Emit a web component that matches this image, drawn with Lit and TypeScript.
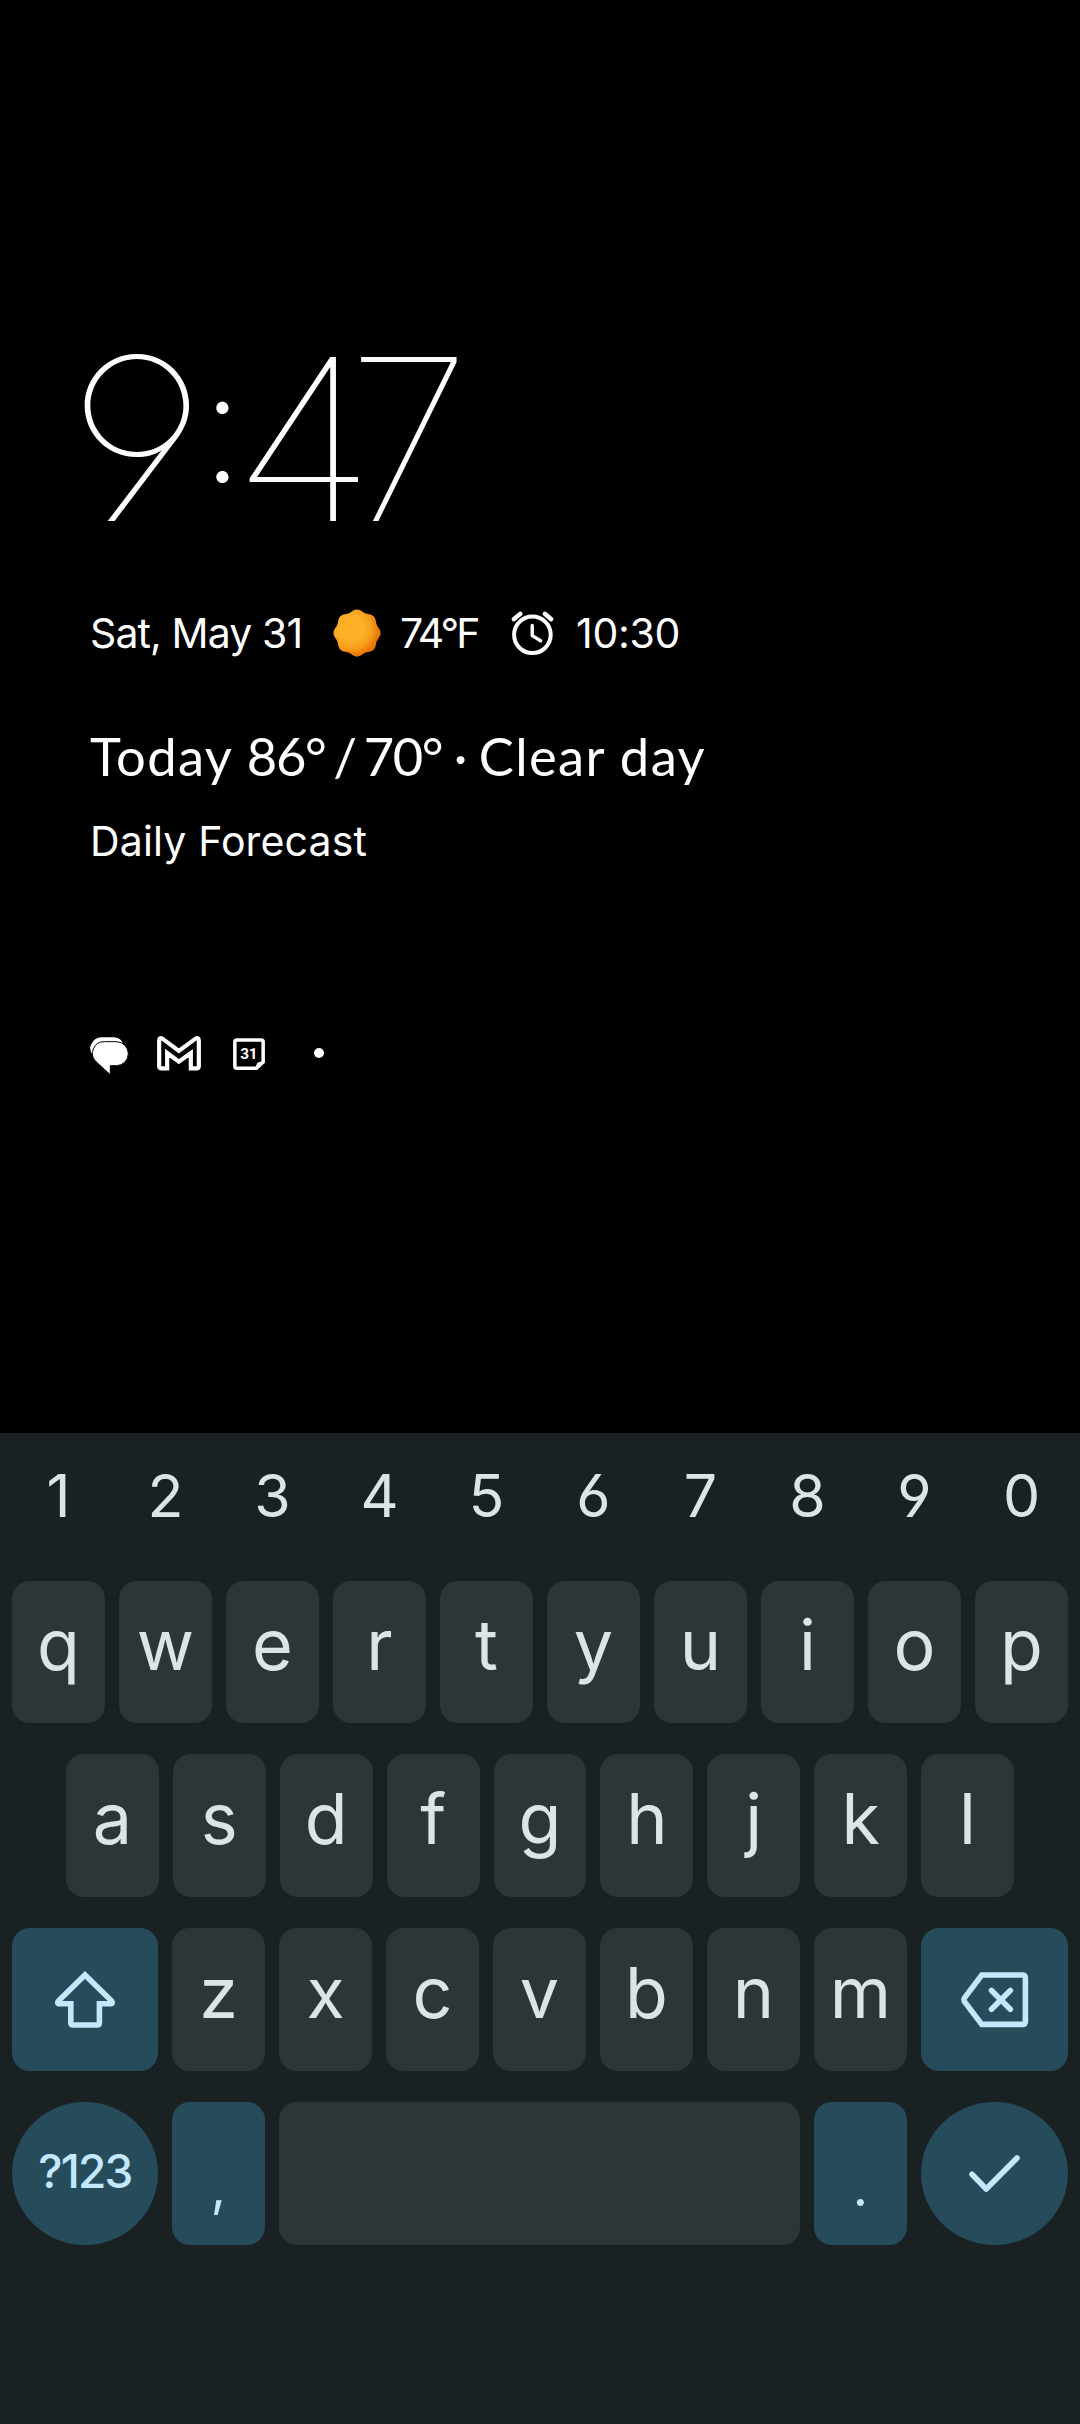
import { LitElement, html, css } from "lit";
import { customElement, property } from "lit/decorators.js";
import { classMap } from "lit/directives/class-map.js";

/** Outline of the eight-lobed sun, drawn round (24, 24). */
const sunOutline = (() => {
  const pts: string[] = [];
  for (let a = 0; a < 360; a += 3) {
    const t = (a * Math.PI) / 180;
    const r = 22.5 + 1.1 * Math.cos(8 * t);
    pts.push(`${(24 + r * Math.sin(t)).toFixed(2)} ${(24 - r * Math.cos(t)).toFixed(2)}`);
  }
  return `M${pts.join("L")}Z`;
})();

const shiftIcon = html`<svg width="60" height="57" viewBox="0 0 60 57" fill="none" stroke="currentColor" stroke-width="5.6">
  <path d="M30 3.9L56.2 29.6Q58.8 32.8 55 32.8H44.4V51.5Q44.4 54 41.9 54H18.3Q15.8 54 15.8 51.5V32.8H5Q1.2 32.8 3.8 29.6Z"/></svg>`;

const backspaceIcon = html`<svg width="68" height="56" viewBox="0 0 68 56" fill="none" stroke="currentColor" stroke-width="5.6">
  <path d="M20.8 3H61.4Q64.4 3 64.4 6V49.4Q64.4 52.4 61.4 52.4H20.8L3.9 30.1Q2.2 27.7 3.9 25.3Z"/>
  <path stroke-linecap="round" d="M30.5 18.5L49.3 37.3M49.3 18.5L30.5 37.3"/></svg>`;

const checkIcon = html`<svg width="51" height="37" viewBox="0 0 51 37" fill="none" stroke="currentColor" stroke-width="5.6"
  stroke-linecap="round" stroke-linejoin="round"><path d="M3 19.3L17.2 34L48 3"/></svg>`;

@customElement("kb-key")
export class KbKey extends LitElement {
  @property() kind = "letter";
  static styles = css`
    :host { display: block; min-width: 0; }
    .key {
      box-sizing: border-box; height: 100%; display: flex; align-items: center; justify-content: center;
      border-radius: 18px; background: #2e3538; color: #dce4e5; line-height: 1;
    }
    .letter { font-size: 70px; padding-bottom: 14px; }
    .digit, .open-digit { font-size: 59px; padding-bottom: 23px; background: none; }
    .open-digit { font-feature-settings: "ss01"; }
    .accent, .mark, .symbols, .enter { background: #264b5b; color: #c3e8fd; }
    .mark { font-size: 53px; padding-top: 27px; }
    .symbols { font-size: 46px; font-weight: 500; letter-spacing: -1.8px; padding-bottom: 5px; border-radius: 50%; }
    .enter { border-radius: 50%; }
  `;
  render() {
    return html`<div class=${classMap({ key: true, [this.kind]: true })}><slot></slot></div>`;
  }
}

@customElement("app-root")
export class AppRoot extends LitElement {
  static styles = css`
    :host {
      display: flex; flex-direction: column; height: 2424px; overflow: hidden;
      background: #000; color: #fff; font-family: Inter, Roboto, sans-serif;
    }
    svg { display: block; flex: none; }
    .lock { box-sizing: border-box; height: 1433px; padding: 326px 90px 0; display: flex; flex-direction: column; }
    .clock {
      display: flex; height: 226px; line-height: 226px; font-size: 226px; font-weight: 124;
      margin-left: -17px;
    }
    .clock span { flex: none; text-align: center; }
    .nine { width: 128px; transform: scaleX(1.1); font-feature-settings: "ss01"; }
    .colon { width: 38px; font-size: 155px; font-weight: 170; line-height: 199px; }
    .four { width: 118px; margin-left: -3px; transform: scaleX(1.07); }
    .seven { width: 106px; margin-left: -7px; }
    .status { display: flex; align-items: center; height: 48px; margin-top: 57px; font-size: 41px; line-height: 48px; white-space: pre; }
    .date { width: 243px; letter-spacing: -0.9px; }
    .temp { width: 110px; margin-left: 19px; letter-spacing: -3px; }
    .alarm { margin-left: 21px; letter-spacing: -0.3px; }
    .forecast { margin-top: 67px; height: 64px; font: 400 52.5px/64px Lato, sans-serif; letter-spacing: 1.4px; white-space: pre; }
    .range { letter-spacing: -1.4px; word-spacing: -4px; }
    .dot { letter-spacing: 0; word-spacing: -2px; }
    .source { margin-top: 29px; height: 48px; font-size: 41px; line-height: 48px; letter-spacing: 0.15px; white-space: pre; }
    .notes { display: flex; margin-top: 171px; height: 40px; }
    .gmail { margin-left: 28px; }
    .calendar { margin-left: 32px; }
    .more { width: 10px; height: 10px; border-radius: 50%; background: #fff; margin: 12px 0 0 49px; }
    .keyboard { flex: 1; background: #192123; }
    .row { display: flex; gap: 14px; padding: 0 12px; height: 143px; margin-bottom: 31px; }
    .digits { height: 148px; margin-bottom: 0; }
    .top { height: 142px; }
    .home { padding: 0 66px; }
    .row kb-key { flex: 1 1 0; }
    .row kb-key.wide { flex: none; width: 146px; }
    .row kb-key.wide:last-child { width: 147px; }
    .row kb-key.space { flex: none; width: 521px; }
  `;

  private keys(chars: string, kind = "letter") {
    return [...chars].map((c) => html`<kb-key kind=${"69".includes(c) ? "open-digit" : kind}>${c}</kb-key>`);
  }

  render() {
    return html`
      <section class="lock">
        <div class="clock">
          <span class="nine">9</span><span class="colon">:</span><span class="four">4</span><span class="seven">7</span>
        </div>
        <div class="status">
          <span class="date">Sat, May 31</span>
          <svg width="48" height="48" viewBox="0 0 48 48">
            <radialGradient id="sun" cx="0.38" cy="0.4" r="0.66">
              <stop offset="0.4" stop-color="#fdb028"/><stop offset="0.66" stop-color="#f79d1c"/>
              <stop offset="0.86" stop-color="#ea7a06"/><stop offset="1" stop-color="#e57000"/>
            </radialGradient>
            <path d=${sunOutline} fill="url(#sun)"/>
          </svg>
          <span class="temp">74°F</span>
          <svg width="45" height="46" viewBox="0 0 45 46" fill="none" stroke="#fff" stroke-linecap="round">
            <circle cx="22.4" cy="24.8" r="18.3" stroke-width="4"/>
            <path stroke-width="3.4" stroke-linejoin="round" d="M22.2 15.5V25.6L30.6 30.8"/>
            <path stroke-width="4.4" d="M3.8 9.2L10.4 3.8M34.8 3.8L41.2 9.2"/>
          </svg>
          <span class="alarm">10:30</span>
        </div>
        <div class="forecast">Today <span class="range">86° / 70°</span><span class="dot"> · </span>Clear day</div>
        <div class="source">Daily Forecast</div>
        <div class="notes">
          <svg width="39" height="39" viewBox="60 50 117 117" fill="#fff">
            <path d="M66 105Q57 88 63 76Q72 55 95 54H132Q150 55 158 70L120 100Z"/>
            <path stroke="#000" stroke-width="3" d="M104 67H139A35 35 0 0 1 139 139H121V166L79 128A35 35 0 0 1 104 67Z"/>
          </svg>
          <svg class="gmail" width="44" height="39" viewBox="260.500 50 132 117" fill="none" stroke="#fff" stroke-width="12.500">
            <path d="M267 140V64Q267 53 277 58L326 95L376 58Q386 53 386 64V140Q386 147 380 147H362V101L326 127L291 101V147H273Q267 147 267 140Z"/>
          </svg>
          <svg class="calendar" width="32" height="39" viewBox="488.500 50 96 117" fill="none" stroke="#fff" stroke-width="10.500">
            <path d="M500 62H573Q579 62 579 68V128L559 147H500Q494 147 494 141V68Q494 62 500 62Z"/>
            <path fill="#fff" stroke="none" d="M554 147L562 130L579 124V130L560 150Z"/>
            <text x="535.500" y="120" text-anchor="middle" fill="#fff" stroke="none" font-family="Roboto" font-weight="700" font-size="46" letter-spacing="-1.500">31</text>
          </svg>
          <div class="more"></div>
        </div>
      </section>
      <section class="keyboard">
        <div class="row digits">${this.keys("1234567890", "digit")}</div>
        <div class="row top">${this.keys("qwertyuiop")}</div>
        <div class="row home">${this.keys("asdfghjkl")}</div>
        <div class="row">
          <kb-key class="wide" kind="accent">${shiftIcon}</kb-key>
          ${this.keys("zxcvbnm")}
          <kb-key class="wide" kind="accent">${backspaceIcon}</kb-key>
        </div>
        <div class="row">
          <kb-key class="wide" kind="symbols">?123</kb-key>
          ${this.keys(",", "mark")}
          <kb-key class="space" kind="letter"></kb-key>
          ${this.keys(".", "mark")}
          <kb-key class="wide" kind="enter">${checkIcon}</kb-key>
        </div>
      </section>
    `;
  }
}
